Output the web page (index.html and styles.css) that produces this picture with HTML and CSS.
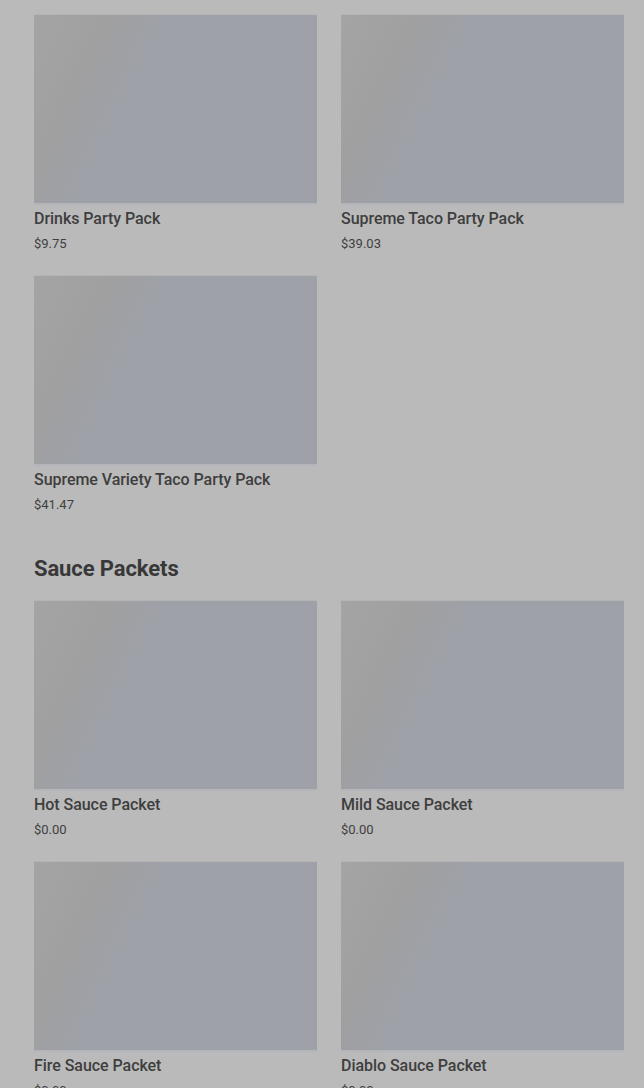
FILE: index.html
```html
<!DOCTYPE html>
<html>
<head>
<meta charset="utf-8">
<link rel="stylesheet" href="styles.css">
</head>
<body>
<main class="page">
  <section class="section">
    <div class="grid">
      <div class="card"><div class="thumb"></div><div class="title">Drinks Party Pack</div><div class="price">$9.75</div></div>
      <div class="card"><div class="thumb"></div><div class="title">Supreme Taco Party Pack</div><div class="price">$39.03</div></div>
      <div class="card"><div class="thumb"></div><div class="title">Supreme Variety Taco Party Pack</div><div class="price">$41.47</div></div>
    </div>
  </section>
  <section class="section">
    <h2 class="heading">Sauce Packets</h2>
    <div class="grid">
      <div class="card"><div class="thumb"></div><div class="title">Hot Sauce Packet</div><div class="price">$0.00</div></div>
      <div class="card"><div class="thumb"></div><div class="title">Mild Sauce Packet</div><div class="price">$0.00</div></div>
      <div class="card"><div class="thumb"></div><div class="title">Fire Sauce Packet</div><div class="price">$0.00</div></div>
      <div class="card"><div class="thumb"></div><div class="title">Diablo Sauce Packet</div><div class="price">$0.00</div></div>
    </div>
  </section>
</main>
</body>
</html>
```

FILE: styles.css
```css
html, body {
  margin: 0;
  padding: 0;
  background: #bababa;
  height: 100%;
  overflow: hidden;
}
body {
  font-family: Roboto, "Liberation Sans", sans-serif;
  color: #3d3d3d;
}
.page {
  padding: 15px 20px 0 34px;
}
.grid {
  display: grid;
  grid-template-columns: 283px 283px;
  column-gap: 24px;
  row-gap: 23px;
}
.thumb {
  height: 188px;
  background: linear-gradient(116deg, #a4a4a4 0%, #a2a2a2 12%, #a0a0a0 20%, #9fa0a4 27%, #9ea1a8 35%, #9ea1a8 100%);
  box-shadow: 0 2px 0 #b3b5bb, 0 -1px 0 #b4b4b4;
}
.title {
  margin-top: 6px;
  font-size: 16px;
  line-height: 20px;
  font-weight: 500;
  color: #3e3e3e;
  letter-spacing: -0.05px;
}
.price {
  margin-top: 6px;
  font-size: 13px;
  line-height: 18px;
  color: #3f3f3f;
  letter-spacing: 0;
}
.heading {
  margin: 41px 0 18px;
  font-size: 22px;
  line-height: 28px;
  font-weight: 700;
  letter-spacing: -0.1px;
  color: #383838;
}
```
